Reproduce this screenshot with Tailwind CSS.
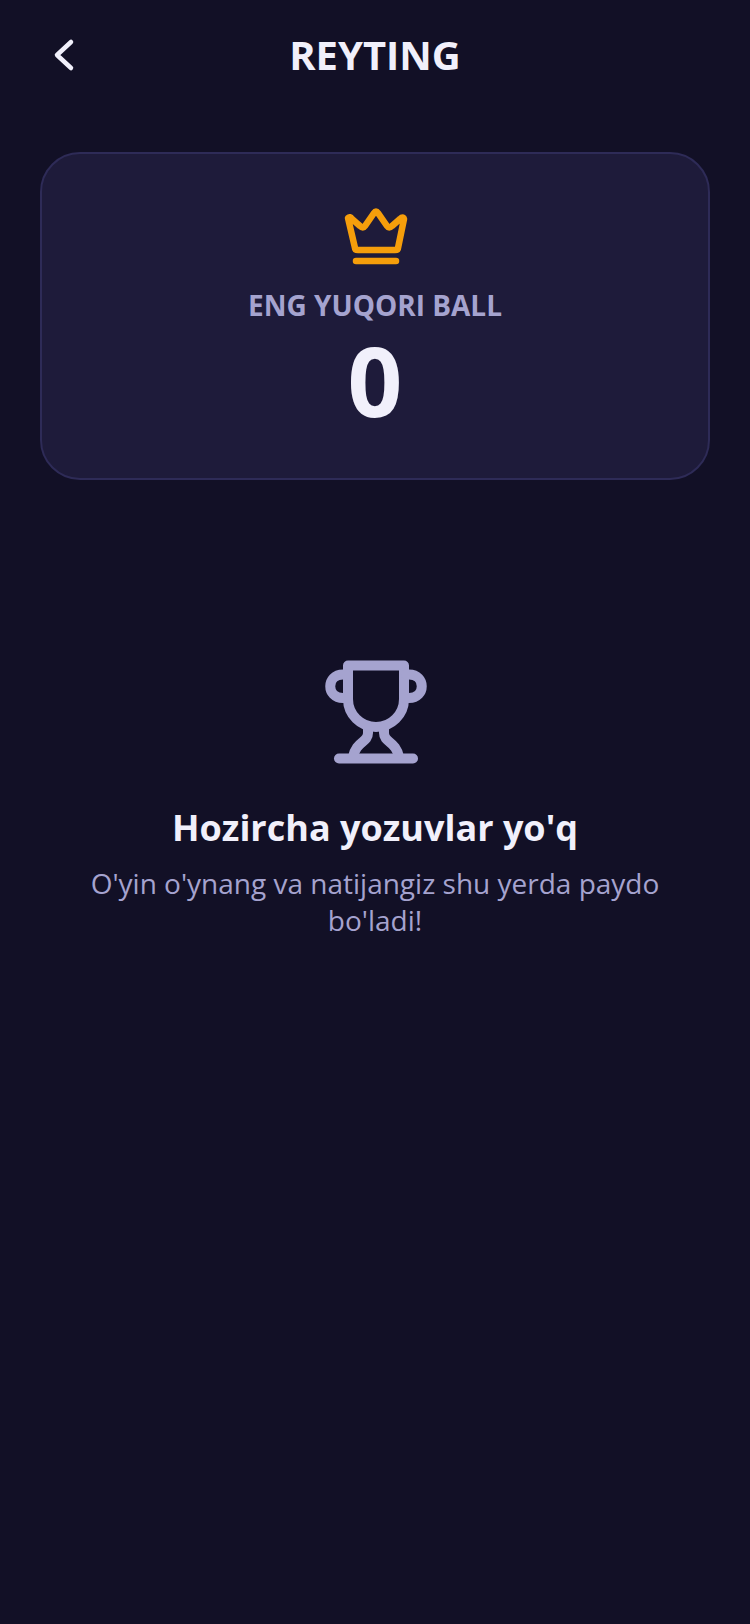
<!DOCTYPE html>
<html lang="uz">
<head>
    <meta charset="UTF-8">
    <meta name="viewport" content="width=device-width, initial-scale=1.0">
    <title>Reyting</title>
    <script src="https://cdn.jsdelivr.net/npm/@tailwindcss/browser@4"></script>
</head>
<body class="min-h-screen bg-[#121026] font-['Open_Sans',sans-serif]">
    <div class="flex flex-col h-[1624px] w-[750px] overflow-hidden">
        <!-- Header -->
        <header class="flex items-center justify-between h-[56px] mt-[27px] px-[40px]">
            <a href="#" class="flex items-center justify-center w-[48px] h-[48px]">
                <svg width="48" height="48" viewBox="40 32 48 48" fill="none" stroke="#f1f0fb" stroke-width="4.5" stroke-linecap="round" stroke-linejoin="round">
                    <path d="M71 43 L57 56 L71 69" />
                </svg>
            </a>
            <h1 class="text-[40px] leading-[56px] font-bold text-[#f1f0fb]">REYTING</h1>
            <div class="w-[48px]"></div>
        </header>

        <!-- Best score -->
        <section class="flex flex-col items-center mt-[69px] mx-[40px] h-[328px] rounded-[40px] border-2 border-[#2e2b57] bg-[#1e1b3a]">
            <svg class="mt-[50px]" width="72" height="64" viewBox="339 204 72 64" fill="none" stroke="#f59e0b" stroke-width="6.5" stroke-linecap="round" stroke-linejoin="round">
                <path d="M348 218 Q350 216 352 219 L360 226 Q363 229 365 226 L374 213 Q376 210 378 213 L387 226 Q389 229 392 226 L400 219 Q403 216 404 219 L398 248 Q398 250 395 250 H358 Q355 250 355 248 Z" />
                <path d="M356 261 H396" />
            </svg>
            <p class="mt-[18px] text-[28px] leading-[38px] font-bold text-[#a5a3cf]">ENG YUQORI BALL</p>
            <p class="-mt-[2px] text-[96px] leading-[116px] font-bold text-[#f1f0fb]">0</p>
        </section>

        <!-- Empty state -->
        <section class="flex flex-col items-center mt-[175px] px-[60px]">
            <svg width="112" height="112" viewBox="319 655 112 112" fill="none" stroke="#a5a3cf" stroke-width="10" stroke-linecap="round" stroke-linejoin="round">
                <path d="M348 665.5 H404 V699 A28 28 0 0 1 348 699 Z" />
                <path d="M346 674.5 H343 C326 674.5 326 698 343 698 H348" />
                <path d="M406 674.5 H409 C426 674.5 426 698 409 698 H404" />
                <path d="M368 728 V733 C368 743 356 741 353 757" />
                <path d="M384 728 V733 C384 743 396 741 399 757" />
                <path d="M339 758.5 H413" />
            </svg>
            <h2 class="mt-[35px] text-[36px] leading-[52px] font-bold text-[#f1f0fb]">Hozircha yozuvlar yo'q</h2>
            <p class="mt-[11px] text-[28px] leading-[37px] text-center text-[#a5a3cf]">O'yin o'ynang va natijangiz shu yerda paydo bo'ladi!</p>
        </section>
    </div>
</body>
</html>
